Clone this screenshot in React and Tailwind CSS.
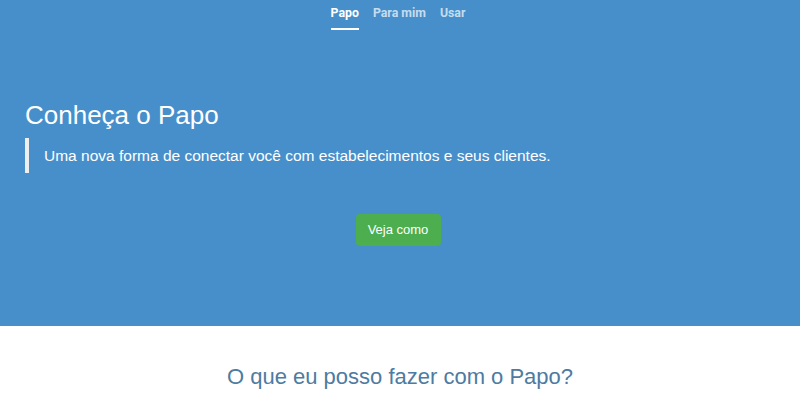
export default function App() {
  return (
    <div className="w-[800px] h-[400px] overflow-hidden bg-white" style={{ fontFamily: '"Liberation Sans", Arial, sans-serif' }}>
      <div className="h-[326px] bg-[#478fca] flex flex-col">
        <nav className="flex justify-center gap-[14px] pt-[5px] pr-[4px] font-['Roboto',sans-serif] font-bold text-[12.3px]">
          <a className="text-white border-b-2 border-white pb-[7px] px-0 leading-[16px]">Papo</a>
          <a className="text-white/70 pb-[7px] leading-[16px]">Para mim</a>
          <a className="text-white/70 pb-[7px] leading-[16px]">Usar</a>
        </nav>
        <div className="px-[25px] pt-[70px]">
          <h1 className="text-white text-[26px] leading-[30px]">Conheça o Papo</h1>
          <div className="mt-[8px] border-l-[4px] border-[#eeeeee] pl-[15px] py-[8px] text-white text-[15.5px] leading-[19px]">
            Uma nova forma de conectar você com estabelecimentos e seus clientes.
          </div>
        </div>
        <div className="flex justify-center mt-[41px] pr-[4px]">
          <button className="bg-[#4cae4f] text-white text-[13px] rounded-[4px] w-[85px] h-[32px]">Veja como</button>
        </div>
      </div>
      <h2 className="text-center text-[#4d7ba1] text-[22px] mt-[37px] leading-[28px]">O que eu posso fazer com o Papo?</h2>
    </div>
  );
}
